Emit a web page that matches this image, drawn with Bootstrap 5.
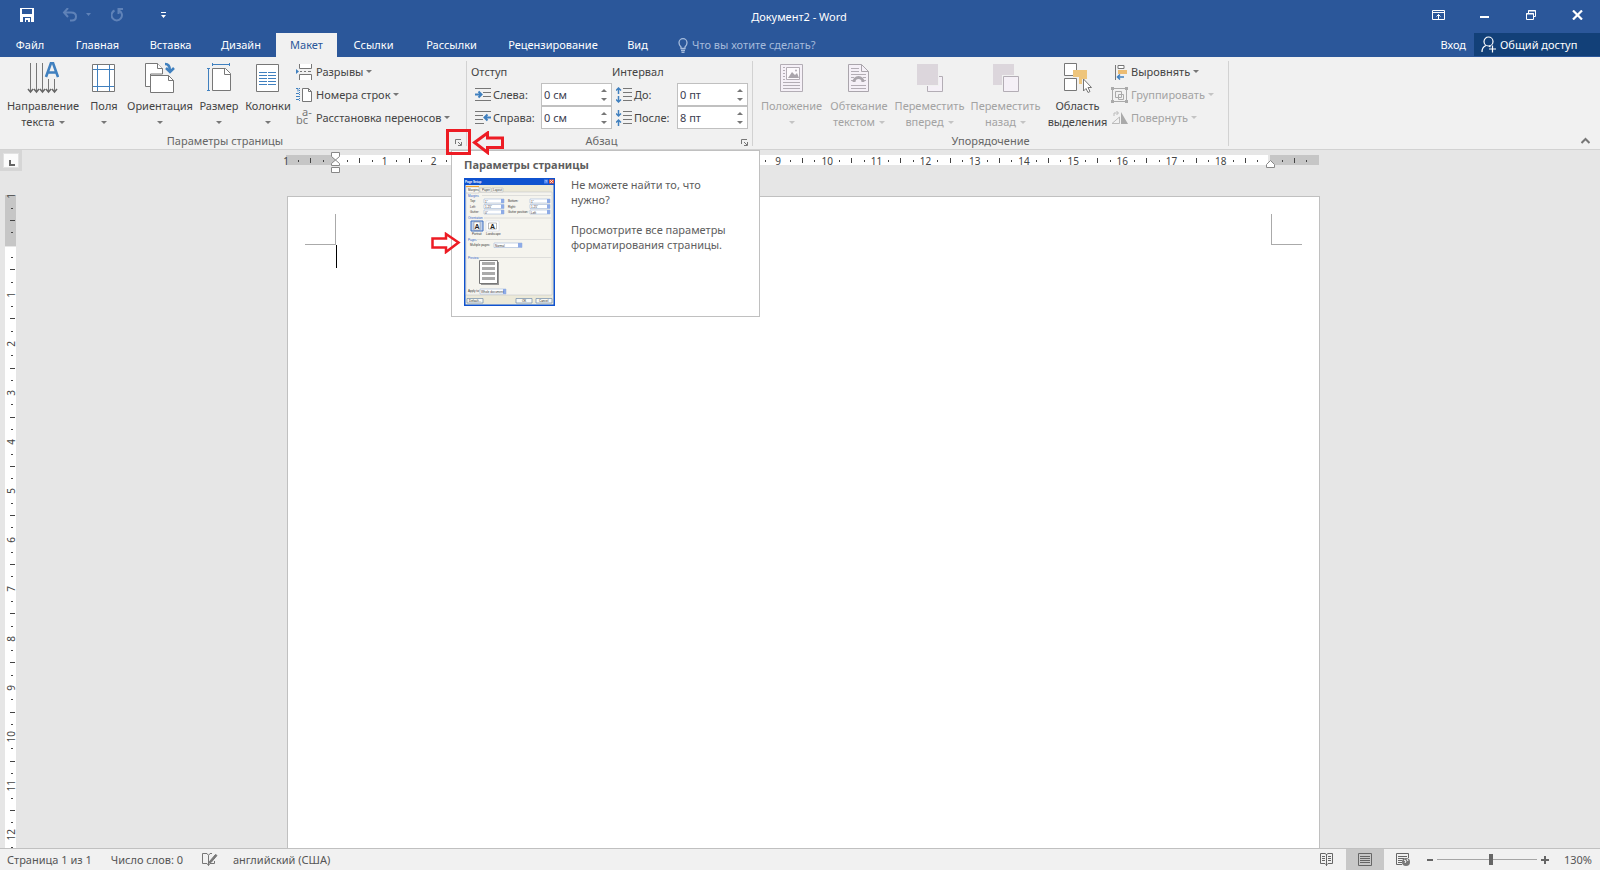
<!DOCTYPE html>
<html lang="ru">
<head>
<meta charset="utf-8">
<meta name="viewport" content="width=device-width, initial-scale=1">
<title>Документ2 - Word</title>
<link href="https://cdn.jsdelivr.net/npm/bootstrap@5.3.0/dist/css/bootstrap.min.css" rel="stylesheet">
<style>
  body { font: 11px/16px "Noto Sans", "Open Sans", sans-serif; color: #444; background: #e6e6e6; }
  svg { display: block; flex: none; fill: none; }
  button, input { font: inherit; color: inherit; }
  .plain { background: none; border: 0; padding: 0; border-radius: 0; }

  /* title bar and tabs */
  .app-head { background: #2b579a; color: #fff; }
  .title-row { height: 33px; }
  .qat { padding: 0 0 4px 20px; }
  .win { padding: 0 17px 3px 0; }
  .tab-row { height: 24px; }
  .tab-row a { color: #fff; text-decoration: none; padding: 4px 0; text-align: center; white-space: nowrap; }
  .tab-row a.current { background: #f1f1f1; color: #2b579a; }
  .w-file { width: 60px; } .w-home { width: 75px; } .w-ins { width: 71px; } .w-des { width: 70px; }
  .w-lay { width: 61px; } .w-ref { width: 73px; } .w-mail { width: 83px; } .w-rev { width: 120px; } .w-view { width: 49px; }
  .tell { background: none; border: 0; color: #a5bbdc; width: 160px; padding: 0; outline: 0; }
  .tell::placeholder { color: #a5bbdc; opacity: 1; }
  .share { background: #124078; color: #fff; height: 23px; width: 126px; padding: 0 0 0 7px; }

  /* ribbon */
  .ribbon { background: #f1f1f1; border-bottom: 1px solid #d2d2d2; height: 93px; }
  .rgroup { position: relative; border-right: 1px solid #d2d2d2; margin: 4px 0; height: 85px; }
  .rgroup-body { height: 73px; margin-top: -1px; }
  .rgroup-name { color: #666; text-align: center; height: 16px; line-height: 16px; }
  .big { display: flex; flex-direction: column; align-items: center; height: 70px; white-space: nowrap; color: #444; padding-top: 2px; }
  .big svg { margin-bottom: 4px; }
  .big span { display: flex; align-items: center; justify-content: center; gap: 4px; height: 16px; }
  .small-btn { display: flex; align-items: center; gap: 3px; height: 23px; white-space: nowrap; }
  .off, .big.off { color: #a3a3a3; }
  .dn, .up { border: 3px solid transparent; border-top-color: #777; border-bottom: 0; width: 0; height: 0; flex: none; }
  .up { border-bottom: 3px solid #777; border-top: 0; }
  .off .dn { border-top-color: #c4c4c4; }
  .launcher { position: absolute; right: 3px; bottom: 0; width: 8px; height: 8px; }
  .field-row { height: 23px; display: flex; align-items: center; }
  .field-row label { width: 48px; margin-left: 2px; white-space: nowrap; }
  .field-row.wide label { width: 43px; }
  .spin { border: 1px solid #c0c0c0; background: #fff; width: 71px; height: 23px; display: flex; align-items: center; }
  .spin input { border: 0; background: none; width: 59px; padding: 0 0 0 2px; outline: 0; color: #3c3c50; }
  .spin div { display: flex; flex-direction: column; gap: 6px; }
  .spin button { display: flex; }
  .g-page { width: 467px; } .g-para { width: 286px; } .g-arr { width: 476px; }

  /* screen tip and marks over the ribbon */
  .tip { position: absolute; left: 451px; top: 89px; width: 309px; height: 167px; background: #fff; border: 1px solid #c0c0c0; z-index: 5; padding: 6px 12px; color: #5e5e5e; }
  .tip p { margin: 0 0 15px; line-height: 15px; width: 170px; }
  .red-box { position: absolute; left: 446px; top: 68px; width: 25px; height: 26px; border: 3px solid #ed1c24; z-index: 6; }
  .red-left { position: absolute; left: 472px; top: 70px; z-index: 6; }
  .red-right { position: absolute; left: 430px; top: 171px; z-index: 6; }

  /* work area */
  .side { width: 22px; }
  .tabstop { background: #d6d6d6; height: 21px; padding: 3px; }
  .tabstop button { width: 16px; height: 15px; background: #fcfcfc; border: 1px solid #e2e2e2; padding: 5px 0 0 5px; }
  .rule-num { font-size: 10px; line-height: 10px; color: #444; }
  .v-clip { margin: 24px 0 0 5px; width: 11px; }
  .v-rule { display: flow-root; height: 1474px; background: linear-gradient(#c6c6c6 51px, #e6e6e6 51px, #e6e6e6 52px, #fff 52px); }
  .v-rule .strip { margin-top: -5px; height: 1474px; }
  .v-rule .cell { flex-direction: column; width: 11px; }
  .v-rule .slot { width: 11px; }
  .v-rule .num { writing-mode: vertical-rl; transform: rotate(180deg); }
  .v-rule .tick { width: 5px; height: 1px; margin-left: 4px; }
  .v-rule .dot { width: 2px; height: 1px; margin-left: 3px; }
  .cell { display: flex; flex: 1 1 0; min-width: 0; min-height: 0; }
  .slot { display: flex; flex: 1 1 0; align-items: center; justify-content: center; min-width: 0; min-height: 0; white-space: nowrap; }
  .tick { width: 1px; height: 5px; background: #444; }
  .dot { width: 1px; height: 2px; background: #444; }
  .paper-col { padding-right: 15px; }
  .sheet-wrap { width: 1033px; max-width: 100%; }
  .h-rule { position: relative; margin: 5px 0 31px -1px; height: 10px; width: 1033px; background: linear-gradient(90deg, #c6c6c6 49px, #fff 49px, #fff 982px, #e6e6e6 982px, #e6e6e6 984px, #c6c6c6 984px); }
  .h-rule .strip { margin-left: -6px; width: 1033px; height: 11px; }
  .mk { position: absolute; }
  .mk-l { left: 45px; top: -3px; }
  .mk-r { left: 980px; top: 5px; }
  .sheet { background: #fff; border: 1px solid #c0c0c0; border-bottom: 0; padding: 17px; }
  .corner { width: 31px; height: 31px; border: 0 solid #aaa; border-bottom-width: 1px; }
  .corner.l { border-right-width: 1px; } .corner.r { border-left-width: 1px; }
  .typing { margin-left: 31px; width: 1px; height: 23px; background: #000; }

  /* status bar */
  .status { background: #f1f1f1; border-top: 1px solid #c0c0c0; height: 22px; color: #555; }
  .view-on { background: #c8c8c8; width: 38px; height: 21px; display: flex; align-items: center; justify-content: center; }
  .zoom { appearance: none; width: 100px; height: 12px; margin: 0 4px; background: linear-gradient(#a6a6a6, #a6a6a6) center / 100% 1px no-repeat; }
  .zoom::-webkit-slider-thumb { appearance: none; width: 4px; height: 11px; background: #666; border: 0; border-radius: 0; }
</style>
</head>
<body class="d-flex flex-column vh-100 overflow-hidden">

<header class="app-head flex-shrink-0">
  <div class="title-row d-flex align-items-center">
    <div class="qat d-flex align-items-center flex-fill" style="flex-basis:0">
      <button class="plain" aria-label="Сохранить"><svg width="14" height="14"><path d="M0 0h14v14H0z" fill="#fff"/><path d="M2 1h10v5H2zM3 9h8v5H3z" fill="#2b579a"/><path d="M5 10h5v4H8v-2H6v2H5z" fill="#fff"/><path d="M6 12h2v2H6z" fill="#2b579a"/></svg></button>
      <button class="plain ms-4 ps-1" aria-label="Отменить"><svg width="16" height="14" stroke="#5f82b8" stroke-width="2"><path d="M6 0 2 4.500 6 9M2 4.500h7q5 0 5 4t-4 4H8"/></svg></button>
      <svg class="ms-2" width="5" height="3"><path d="M0 0h5L2.500 3z" fill="#5f82b8"/></svg>
      <button class="plain ms-3" aria-label="Повторить"><svg class="ms-1" width="14" height="14" stroke="#5f82b8" stroke-width="2"><path d="M3.500 2.500A5.200 5.200 0 1 0 8 2.500M12 1H7.500v5"/></svg></button>
      <button class="plain ms-4 ps-2" aria-label="Настройка панели"><svg class="ms-1" width="5" height="6"><path d="M0 0h5v1H0zM0 3h5L2.500 6z" fill="#fff"/></svg></button>
    </div>
    <div>Документ2 - Word</div>
    <div class="win d-flex align-items-center justify-content-end flex-fill" style="flex-basis:0">
      <button class="plain" aria-label="Параметры ленты"><svg width="13" height="10" stroke="#fff"><path d="M.5.5h12v9H.5zM0 2.500h13M6.500 9V4.500M4.500 6.500l2-2 2 2"/></svg></button>
      <button class="plain" style="margin-left:35px" aria-label="Свернуть"><svg width="10" height="10"><path d="M0 6h9v2H0z" fill="#fff"/></svg></button>
      <button class="plain" style="margin-left:36px" aria-label="Восстановить"><svg width="11" height="10" stroke="#fff"><path d="M.5 3.500h7v6h-7zM0 4h8M2.500 3V.5h7v6H8M2 1h8"/></svg></button>
      <button class="plain" style="margin-left:35px" aria-label="Закрыть"><svg width="11" height="10" stroke="#fff" stroke-width="2.200"><path d="m1 .5 9 9m0-9-9 9"/></svg></button>
    </div>
  </div>
  <nav class="tab-row d-flex">
    <a class="w-file" href="#">Файл</a><a class="w-home" href="#">Главная</a><a class="w-ins" href="#">Вставка</a><a class="w-des" href="#">Дизайн</a><a class="w-lay current" href="#">Макет</a><a class="w-ref" href="#">Ссылки</a><a class="w-mail" href="#">Рассылки</a><a class="w-rev" href="#">Рецензирование</a><a class="w-view" href="#">Вид</a>
    <div class="d-flex align-items-center ms-3">
      <svg width="10" height="15" stroke="#a5bbdc" stroke-width="1.300"><path d="M3 10.500V9Q1 7 1 4.700a4 4 0 0 1 8 0Q9 7 7 9v1.500zM3 12.500h4M3.500 14.500h3"/></svg>
      <input class="tell ms-1" aria-label="Что вы хотите сделать?" placeholder="Что вы хотите сделать?">
    </div>
    <a class="ms-auto pe-2" href="#">Вход</a>
    <button class="plain share d-flex align-items-center gap-1"><svg width="15" height="17" stroke="#fff" stroke-width="1.200"><circle cx="7.500" cy="5.500" r="4.500"/><path d="M1 16q0-5 4-6.500M8 10l1.500 1M8 13h7M11.500 9.500v7"/></svg>Общий доступ</button>
  </nav>
</header>

<section class="ribbon d-flex flex-shrink-0" aria-label="Макет">
  <div class="rgroup g-page">
    <div class="rgroup-body d-flex">
      <button class="plain big" style="width:86px"><svg width="32" height="32"><path d="M3.500 1v29M9.500 1v29M15.500 1v29M21.500 17v13M27.500 17v13" stroke="#777"/><path d="m1 27 2.500 3L6 27M7 27l2.500 3 2.500-3M13 27l2.500 3 2.500-3M19 27l2.500 3 2.500-3M25 27l2.500 3 2.500-3" stroke="#666" stroke-width="1.500"/><path d="m19 15 5-14h2l5 14M21 10.500h8" stroke="#4080bf" stroke-width="2.600"/></svg><span>Направление</span><span>текста <i class="dn"></i></span></button>
      <button class="plain big" style="width:36px"><svg width="24" height="32"><path d="M.5 2.500h22v27H.5z" fill="#fff" stroke="#777"/><path d="M5.500 3v26M17.500 3v26M1 7.500h21M1 24.500h21" stroke="#4080bf"/></svg><span>Поля</span><span><i class="dn"></i></span></button>
      <button class="plain big" style="width:76px"><svg width="30" height="32"><path d="M.5 1.500h12l5 5V12h-12v12.500H.5z" fill="#fff" stroke="#777"/><path d="M12.500 1.500v5h5M5.500 13.500h18l5 5v12h-23z" fill="#fff" stroke="#777"/><path d="M23.500 13.500v5h5" stroke="#777"/><path d="M20 2q5 0 5 7M21 6l4 4 4-4" stroke="#4080bf" stroke-width="2.500"/></svg><span>Ориентация</span><span><i class="dn"></i></span></button>
      <button class="plain big" style="width:42px"><svg width="26" height="32"><path d="M6.500 6.500h13l5 5v17h-18z" fill="#fff" stroke="#777"/><path d="M18.500 6.500v6h6" stroke="#777"/><path d="M6 2.500h18M6.500 1v3M23.500 1v3M2.500 6v22M1 6.500h3M1 28.500h3" stroke="#4080bf"/></svg><span>Размер</span><span><i class="dn"></i></span></button>
      <button class="plain big" style="width:56px"><svg width="24" height="32"><path d="M.5 2.500h22v27H.5z" fill="#fff" stroke="#777"/><path d="M3 10.500h8M12 10.500h8M3 13.500h8M12 13.500h8M3 16.500h8M12 16.500h8M3 19.500h8M12 19.500h8M3 22.500h8M12 22.500h8" stroke="#4080bf"/></svg><span>Колонки</span><span><i class="dn"></i></span></button>
      <div>
        <button class="plain small-btn"><svg width="17" height="16"><path d="M3.500 0v4.500h12V0M3.500 16v-5.500h12V16" fill="#fff" stroke="#777"/><path d="M4 7.500h2M8 7.500h2M12 7.500h3" stroke="#777"/><path d="M0 5l3 2.500L0 10z" fill="#4080bf"/></svg>Разрывы <i class="dn"></i></button>
        <button class="plain small-btn"><svg width="17" height="16"><path d="M6.500 1.500h6l3 3v10h-9z" fill="#fff" stroke="#777"/><path d="M12.500 1.500v3h3" stroke="#777"/><path d="M3.500 1v14" stroke="#4080bf" stroke-dasharray="1 1"/><path d="M0 1.500h2v3M0 6.500h3M0 9.500h3M0 12.500h3" stroke="#4080bf"/></svg>Номера строк <i class="dn"></i></button>
        <button class="plain small-btn"><svg width="17" height="18" font-size="11"><text x="6" y="7" fill="#777">a-</text><text x="0" y="15" fill="#777">bc</text></svg>Расстановка переносов <i class="dn"></i></button>
      </div>
    </div>
    <div class="rgroup-name pe-3">Параметры страницы</div>
    <button class="plain launcher" aria-label="Параметры страницы"><svg width="7" height="7"><path d="M.5 5V.5H6M3 3l3 3M6.500 3v3.500H3" stroke="#777"/></svg></button>

    <div class="tip" role="tooltip">
      <b class="d-block">Параметры страницы</b>
      <div class="d-flex" style="gap:16px">
        <svg style="margin-top:5px" width="91" height="128" viewBox="0 0 91 128" font-size="3" font-family="Liberation Sans, sans-serif">
          <path d="M0 0h91v128H0z" fill="#0f52cf"/><path d="M1.500 7h88v119.500h-88z" fill="#ece9d8"/><path d="M2 14h86v103H2z" fill="#f5f4ee" stroke="#b9bcc4" stroke-width=".5"/>
          <path d="M2 9h13v6H2zM16 10h11v4H16zM28 10h11v4H28z" fill="#faf9f4" stroke="#b0b0b0" stroke-width=".5"/><path d="M2 8.500h13" stroke="#f0a030"/>
          <text x="1" y="5" fill="#fff" font-weight="bold">Page Setup</text><path d="M80 1.500h4v4h-4z" fill="#4d83ee"/><path d="M85 1.500h5v4h-5z" fill="#e2593a"/><text x="81" y="5" fill="#fff">?</text><path d="m86 2 3 3m0-3-3 3" stroke="#fff" stroke-width=".7"/>
          <g fill="#333"><text x="4" y="12.500">Margins</text><text x="18" y="12.500">Paper</text><text x="29" y="12.500">Layout</text><text x="6" y="24">Top:</text><text x="6" y="29.500">Left:</text><text x="6" y="35">Gutter:</text><text x="44" y="24">Bottom:</text><text x="44" y="29.500">Right:</text><text x="44" y="35">Gutter position:</text><text x="8" y="57">Portrait</text><text x="22" y="57">Landscape</text><text x="6" y="68">Multiple pages:</text><text x="4" y="114">Apply to:</text></g>
          <g fill="#2d62c8"><text x="4" y="18.500">Margins</text><text x="4" y="41">Orientation</text><text x="4" y="62.500">Pages</text><text x="4" y="80.500">Preview</text></g>
          <path d="M18 17.500h69M20 40h67M13 61.500h74M14 79.500h73" stroke="#cfcfcf" stroke-width=".6"/>
          <g fill="#fff" stroke="#8fa9d0" stroke-width=".5"><path d="M20 21h20v4H20zM20 26.500h20v4H20zM20 32h20v4H20zM66 21h20v4H66zM66 26.500h20v4H66zM66 32h20v4H66zM30 65h28v4.500H30zM16 111h26v5H16z"/></g>
          <path d="M37 21h3v4h-3zM37 26.500h3v4h-3zM37 32h3v4h-3zM83 21h3v4h-3zM83 26.500h3v4h-3zM83 32h3v4h-3zM54 65h4v4.500h-4zM39 111h3v5h-3z" fill="#8eabe6"/>
          <g fill="#333"><text x="21" y="24.500">1"</text><text x="21" y="30">1.25"</text><text x="21" y="35.500">0"</text><text x="67" y="24.500">1"</text><text x="67" y="30">1.25"</text><text x="67" y="35.500">Left</text><text x="31" y="68.500">Normal</text><text x="17" y="114.500">Whole document</text></g>
          <path d="M7 43h12v10H7z" fill="#c1d2ee" stroke="#3f6ec0"/><path d="M22 43h13v10H22z" fill="#fff" stroke="#ccd6e8" stroke-width=".5"/><path d="M10 44h6v8h-6zM24.500 45h8v6h-8z" fill="#fff" stroke="#777" stroke-width=".5"/><text x="10.500" y="50.500" font-size="7" font-weight="bold" fill="#222">A</text><text x="26" y="50.500" font-size="7" font-weight="bold" fill="#222">A</text>
          <path d="M17 84h18v23H17z" fill="#999"/><path d="M15.500 82.500h18v23h-18z" fill="#fff" stroke="#777"/><path d="M18 85.500h13M18 90.500h13M18 95.500h13M18 100.500h13" stroke="#aaa" stroke-width="3"/>
          <g fill="#f8f8f4" stroke="#6f89a8" stroke-width=".7"><path d="M3 120.500h16v4.500H3zM52 120.500h16v4.500H52zM72 120.500h16v4.500H72z"/></g><g fill="#222"><text x="5" y="124">Default...</text><text x="58" y="124">OK</text><text x="75" y="124">Cancel</text></g>
        </svg>
        <div class="pt-1"><p>Не можете найти то, что нужно?</p><p>Просмотрите все параметры форматирования страницы.</p></div>
      </div>
    </div>
    <div class="red-box"></div>
    <svg class="red-left" width="34" height="24" stroke="#ed1c24" stroke-width="3"><path d="M2.500 11.500 15.500 2v5h15v9.500h-15v5z"/></svg>
    <svg class="red-right" width="31" height="22" stroke="#ed1c24" stroke-width="2.500"><path d="M28.500 10.500 16 2v4.500H2.500v9H16V20z"/></svg>
  </div>

  <div class="rgroup g-para">
    <div class="rgroup-body d-flex">
      <div style="width:145px">
        <div class="field-row ps-1">Отступ</div>
        <div class="field-row"><svg class="ms-2" width="16" height="14"><path d="M0 .5h16M8 4.500h8M8 8.500h8M0 12.500h16" stroke="#777"/><path d="M0 6.500h6M3.500 3.500l3 3-3 3" stroke="#4080bf" stroke-width="2"/></svg><label for="il">Слева:</label><div class="spin"><input id="il" value="0 см"><div><button class="plain" aria-label="Больше"><i class="up"></i></button><button class="plain" aria-label="Меньше"><i class="dn"></i></button></div></div></div>
        <div class="field-row"><svg class="ms-2" width="16" height="14"><path d="M0 .5h16M0 4.500h8M0 8.500h8M0 12.500h9" stroke="#777"/><path d="M10 6.500h6M12.500 3.500l-3 3 3 3" stroke="#4080bf" stroke-width="2"/></svg><label for="ir">Справа:</label><div class="spin"><input id="ir" value="0 см"><div><button class="plain" aria-label="Больше"><i class="up"></i></button><button class="plain" aria-label="Меньше"><i class="dn"></i></button></div></div></div>
      </div>
      <div>
        <div class="field-row">Интервал</div>
        <div class="field-row wide"><svg class="ms-1" width="16" height="16"><path d="M7 1.500h9M7 5.500h9M7 9.500h9M7 13.500h9" stroke="#777"/><path d="M2.500 7V1M0 3.500 2.500 1 5 3.500M2.500 9v6M0 12.500 2.500 15 5 12.500" stroke="#4080bf" stroke-width="1.500"/></svg><label for="sb">До:</label><div class="spin"><input id="sb" value="0 пт"><div><button class="plain" aria-label="Больше"><i class="up"></i></button><button class="plain" aria-label="Меньше"><i class="dn"></i></button></div></div></div>
        <div class="field-row wide"><svg class="ms-1" width="16" height="16"><path d="M7 1.500h9M7 5.500h9M7 9.500h9M7 13.500h9" stroke="#777"/><path d="M2.500 0v6M0 3.500 2.500 6 5 3.500M2.500 16v-6M0 12.500 2.500 10 5 12.500" stroke="#4080bf" stroke-width="1.500"/></svg><label for="sa">После:</label><div class="spin"><input id="sa" value="8 пт"><div><button class="plain" aria-label="Больше"><i class="up"></i></button><button class="plain" aria-label="Меньше"><i class="dn"></i></button></div></div></div>
      </div>
    </div>
    <div class="rgroup-name pe-3">Абзац</div>
    <button class="plain launcher" aria-label="Абзац"><svg width="7" height="7"><path d="M.5 5V.5H6M3 3l3 3M6.500 3v3.500H3" stroke="#777"/></svg></button>
  </div>

  <div class="rgroup g-arr">
    <div class="rgroup-body d-flex ps-1">
      <button class="plain big off" disabled style="width:69px"><svg width="24" height="32"><path d="M.5 2.500h22v27H.5z" fill="#f5f0f7" stroke="#b3adb5"/><path d="M6.500 5.500h13v12h-13z" fill="#fdfafd" stroke="#b3adb5"/><path d="m8 16 4-6 3 3 2-2 2 5z" fill="#aaa5ac"/><circle cx="16" cy="8.500" r="1" fill="#b3adb5"/><path d="M3 5.500h2M3 8.500h2M3 11.500h2M3 14.500h2M3 17.500h2M3 20.500h17M3 23.500h17M3 26.500h17" stroke="#b3adb5"/></svg><span>Положение</span><span><i class="dn"></i></span></button>
      <button class="plain big off" disabled style="width:66px"><svg width="22" height="32"><path d="M.5 2.500h13l7 7v20H.5z" fill="#f5f0f7" stroke="#aaa5ac"/><path d="M13.500 2.500v7h7" stroke="#aaa5ac"/><path d="M3 6.500h8M3 9.500h8M3 12.500h15M3 15.500h3M15 15.500h3M3 18.500h2M16 18.500h2M3 23.500h15M3 26.500h15" stroke="#b3adb5"/><path d="M6 20a4.500 4.500 0 0 1 9 0" stroke="#aaa5ac" stroke-width="3"/></svg><span>Обтекание</span><span>текстом <i class="dn"></i></span></button>
      <button class="plain big off" disabled style="width:75px"><svg width="28" height="32"><path d="M11.500 14.500h15v15h-15z" fill="#f5f0f7" stroke="#b3adb5"/><path d="M0 1h23v23H0z" fill="#f1f1f1"/><path d="M1 2h21v21H1z" fill="#dcd6dc"/></svg><span>Переместить</span><span>вперед <i class="dn"></i></span></button>
      <button class="plain big off" disabled style="width:77px"><svg width="28" height="32"><path d="M1 2h21v21H1z" fill="#dcd6dc"/><path d="M10 13h18v18H10z" fill="#f1f1f1"/><path d="M11.500 14.500h15v15h-15z" fill="#f5f0f7" stroke="#b3adb5"/></svg><span>Переместить</span><span>назад <i class="dn"></i></span></button>
      <button class="plain big" style="width:67px"><svg width="28" height="32"><path d="M.5 1.500h12v12H.5zM.5 16.500h12v12H.5z" fill="#fff" stroke="#777"/><path d="M9 8h14v9h-5v5h-3v-7H9z" fill="#eec57c"/><path d="M19.500 17v12l2.500-2.500 2 4 2-1-2-4h3.500z" fill="#fff" stroke="#777"/></svg><span>Область</span><span>выделения</span></button>
      <div>
        <button class="plain small-btn"><svg width="17" height="16"><path d="M4.500 1v15" stroke="#777"/><path d="M7 1.500h6v3H7z" fill="#fff" stroke="#777"/><path d="M7 6h9v4H7z" fill="#ecbc72"/><path d="M6 13h7M9 10.500 6.500 13 9 15.500" stroke="#4080bf" stroke-width="1.500"/></svg>Выровнять <i class="dn"></i></button>
        <button class="plain small-btn off" disabled><svg width="17" height="16" stroke="#aaa"><path d="M1.500 3v10M15.500 3v10M3 1.500h11M3 14.500h11M4.500 4.500h6v6h-6zM7.500 7.500h5v5h-5z"/><path d="M0 0h3v3H0zM14 0h3v3h-3zM0 13h3v3H0zM14 13h3v3h-3z" fill="#aaa" stroke="none"/></svg>Группировать <i class="dn"></i></button>
        <button class="plain small-btn off" disabled><svg width="17" height="16" stroke="#bbb"><path d="M8.500 7v6.500H1zM3 6V3h4M5.500 1 7.500 3l-2 2"/><path d="M10 2v12h7z" fill="#aaa" stroke="none"/></svg>Повернуть <i class="dn"></i></button>
      </div>
    </div>
    <div class="rgroup-name">Упорядочение</div>
  </div>
  <button class="plain ms-auto align-self-end pb-1" style="margin-right:10px" aria-label="Свернуть ленту"><svg width="9" height="9" stroke="#777" stroke-width="2"><path d="M.5 7 4.500 3l4 4"/></svg></button>
</section>

<main class="d-flex flex-fill overflow-hidden" style="min-height:0">
  <div class="side d-flex flex-column flex-shrink-0">
    <div class="tabstop"><button class="d-block" aria-label="Табуляция"><svg width="6" height="6"><path d="M0 0h2v4h4v2H0z" fill="#666"/></svg></button></div>
    <div class="v-clip flex-fill overflow-hidden" style="min-height:0"><div class="v-rule rule-num"><div class="strip d-flex flex-column" id="vr"></div></div></div>
  </div>
  <div class="paper-col flex-fill d-flex justify-content-center">
    <div class="sheet-wrap d-flex flex-column">
      <div class="h-rule rule-num flex-shrink-0">
        <div class="strip d-flex" id="hr"></div>
        <svg class="mk mk-l" width="10" height="22" stroke="#888"><path d="M.5.5h8v4l-8 7v2h8v-2l-8-7zM.5 15.500h8v5h-8z" fill="#fff"/></svg>
        <svg class="mk mk-r" width="10" height="9" stroke="#888"><path d="M.5 7.500v-3l4-4 4 4v3z" fill="#fff"/></svg>
      </div>
      <div class="sheet flex-fill">
        <div class="d-flex justify-content-between"><div class="corner l"></div><div class="corner r"></div></div>
        <div class="typing"></div>
      </div>
    </div>
  </div>
</main>

<footer class="status d-flex align-items-center flex-shrink-0">
  <span style="margin-left:7px">Страница 1 из 1</span>
  <span style="margin-left:19px">Число слов: 0</span>
  <button class="plain" style="margin-left:19px" aria-label="Правописание"><svg width="16" height="14" stroke="#777"><path d="M6.500 12.500V2.500L5 .5H.5v10H5l1.500 2 1.500-2h4.500V8M6.500 2.500 8 .5h2"/><path d="m7.500 8.500 6-7 1.500 1-6 7-2 .5z" fill="#777"/></svg></button>
  <span style="margin-left:15px">английский (США)</span>
  <div class="ms-auto d-flex align-items-center">
    <button class="plain me-2 pe-1" aria-label="Режим чтения"><svg width="14" height="14" stroke="#666"><path d="M.5.5H5l1.500 1L8 .5h4.500v10H8l-1.500 1.500L5 10.500H.5zM6.500 1v12M2 3.500h3M2 5.500h3M2 7.500h3M8 3.500h3M8 5.500h3M8 7.500h3"/></svg></button>
    <button class="plain view-on" aria-label="Разметка страницы"><svg width="14" height="13" stroke="#666"><path d="M.5.5h13v12H.5zM2 3.500h10M2 5.500h10M2 7.500h10M2 9.500h10"/></svg></button>
    <button class="plain" style="margin:0 16px 0 12px" aria-label="Веб-документ"><svg width="15" height="14" stroke="#666"><path d="M12.500 5V.5H.5v11H6M2 3.500h9M2 5.500h6M2 7.500h4M2 9.500h4"/><circle cx="10" cy="9" r="4" fill="#777" stroke="none"/><path d="m8 7 2 1-1 2M11 6l1 2" stroke="#fff"/></svg></button>
    <button class="plain" aria-label="Уменьшить"><svg width="6" height="8"><path d="M0 3h6v2H0z" fill="#666"/></svg></button>
    <input class="zoom" type="range" min="0" max="100" value="54" aria-label="Масштаб">
    <button class="plain" aria-label="Увеличить"><svg width="8" height="8"><path d="M3 0h2v3h3v2H5v3H3V5H0V3h3z" fill="#666"/></svg></button>
    <span style="margin:0 8px 0 15px">130%</span>
  </div>
</footer>

<script>
  // One cell per centimetre: label, dot, half-way tick, dot.
  function fill(id, labels) {
    document.getElementById(id).innerHTML = labels.map(function (t) {
      return '<div class="cell"><div class="slot"><span class="num">' + t + '</span></div><div class="slot"><i class="dot"></i></div>' +
        '<div class="slot"><i class="tick"></i></div><div class="slot"><i class="dot"></i></div></div>';
    }).join('');
  }
  function upTo(n) { return Array.from({ length: n }, function (_, i) { return i + 1; }); }
  fill('hr', [1, ''].concat(upTo(18), ['']));
  fill('vr', [1, ''].concat(upTo(28)));
</script>
<script src="https://cdn.jsdelivr.net/npm/bootstrap@5.3.0/dist/js/bootstrap.bundle.min.js"></script>
</body>
</html>
